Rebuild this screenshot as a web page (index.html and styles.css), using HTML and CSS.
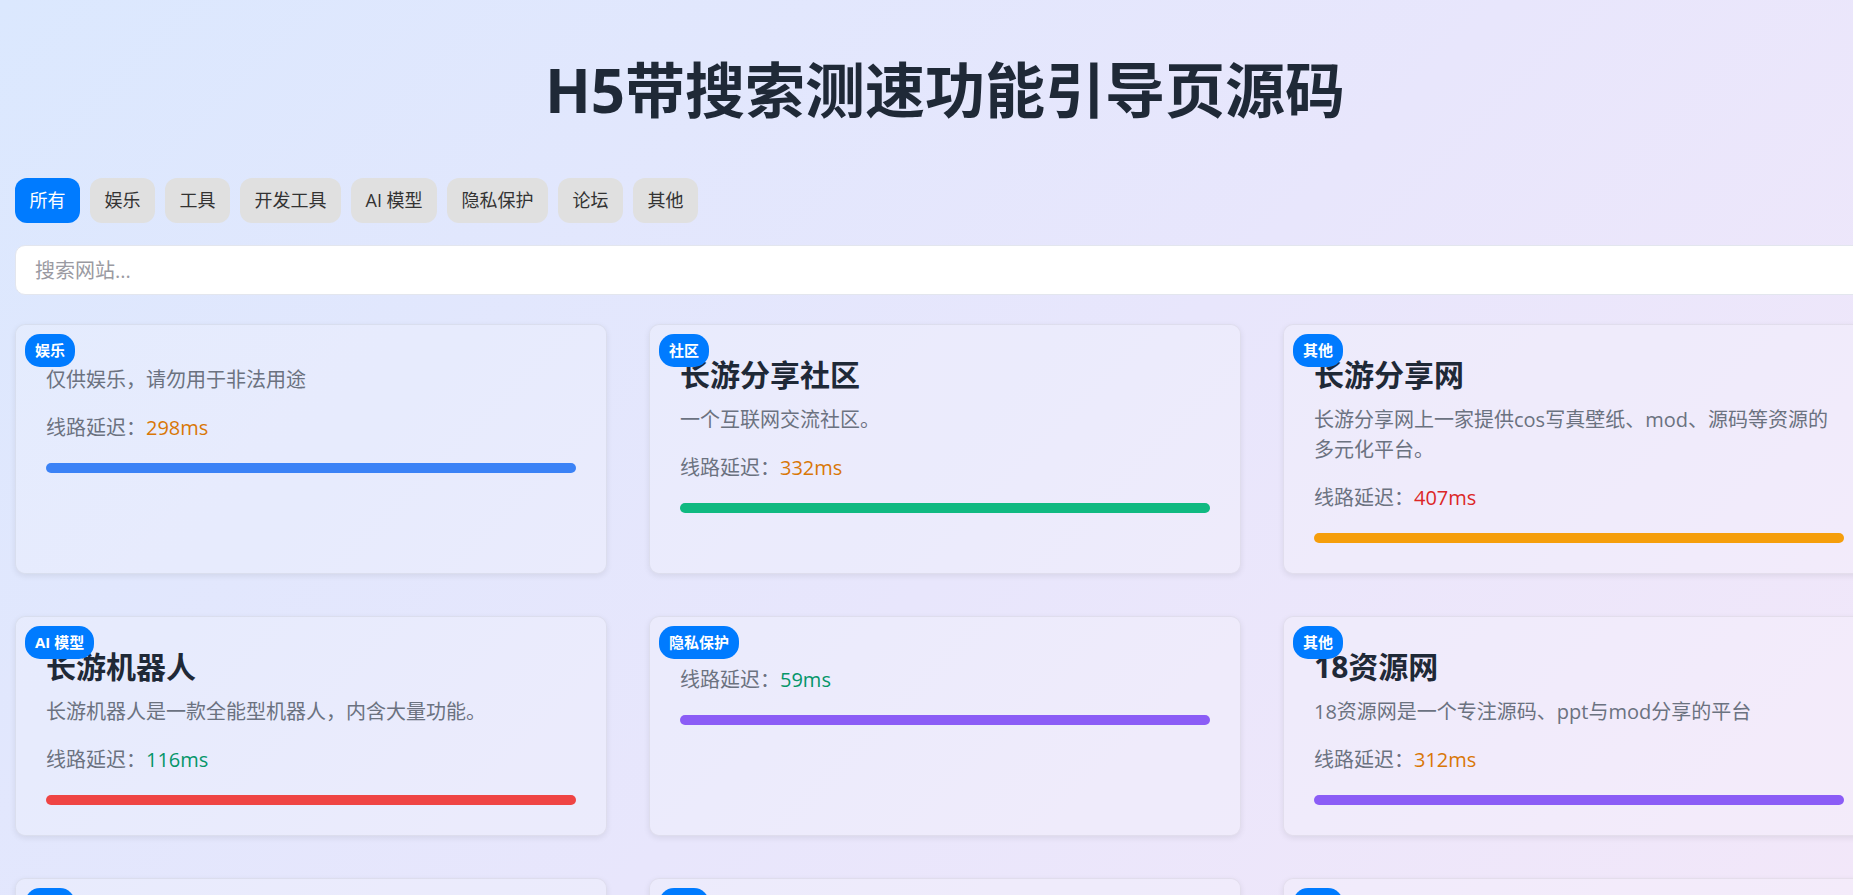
FILE: index.html
```html
<!DOCTYPE html>
<html lang="zh-CN">
<head>
<meta charset="utf-8">
<title>H5带搜索测速功能引导页源码</title>
<link rel="stylesheet" href="styles.css">
</head>
<body>
<div class="page">
  <h1 class="title">H5带搜索测速功能引导页源码</h1>
  <div class="filters">
    <button class="filter active">所有</button>
    <button class="filter">娱乐</button>
    <button class="filter">工具</button>
    <button class="filter">开发工具</button>
    <button class="filter">AI 模型</button>
    <button class="filter">隐私保护</button>
    <button class="filter">论坛</button>
    <button class="filter">其他</button>
  </div>
  <div class="search"><input class="search-input" type="text" placeholder="搜索网站..."></div>
  <div class="grid">
    <div class="card">
      <span class="badge">娱乐</span>
      <p class="desc">仅供娱乐，请勿用于非法用途</p>
      <p class="latency">线路延迟：<span class="ms mid">298ms</span></p>
      <div class="bar blue"></div>
    </div>
    <div class="card">
      <span class="badge">社区</span>
      <h3 class="name">长游分享社区</h3>
      <p class="desc">一个互联网交流社区。</p>
      <p class="latency">线路延迟：<span class="ms mid">332ms</span></p>
      <div class="bar green"></div>
    </div>
    <div class="card">
      <span class="badge">其他</span>
      <h3 class="name">长游分享网</h3>
      <p class="desc">长游分享网上一家提供cos写真壁纸、mod、源码等资源的多元化平台。</p>
      <p class="latency">线路延迟：<span class="ms slow">407ms</span></p>
      <div class="bar amber"></div>
    </div>
    <div class="card">
      <span class="badge">AI 模型</span>
      <h3 class="name">长游机器人</h3>
      <p class="desc">长游机器人是一款全能型机器人，内含大量功能。</p>
      <p class="latency">线路延迟：<span class="ms fast">116ms</span></p>
      <div class="bar red"></div>
    </div>
    <div class="card">
      <span class="badge">隐私保护</span>
      <p class="latency">线路延迟：<span class="ms fast">59ms</span></p>
      <div class="bar purple"></div>
    </div>
    <div class="card">
      <span class="badge">其他</span>
      <h3 class="name">18资源网</h3>
      <p class="desc">18资源网是一个专注源码、ppt与mod分享的平台</p>
      <p class="latency">线路延迟：<span class="ms mid">312ms</span></p>
      <div class="bar purple"></div>
    </div>
    <div class="card">
      <span class="badge">工具</span>
      <h3 class="name">长游工具箱</h3>
      <p class="desc">常用在线工具合集。</p>
      <p class="latency">线路延迟：<span class="ms fast">128ms</span></p>
      <div class="bar blue"></div>
    </div>
    <div class="card">
      <span class="badge">论坛</span>
      <h3 class="name">长游论坛</h3>
      <p class="desc">交流分享的论坛社区。</p>
      <p class="latency">线路延迟：<span class="ms mid">276ms</span></p>
      <div class="bar green"></div>
    </div>
    <div class="card">
      <span class="badge">其他</span>
      <h3 class="name">资源导航</h3>
      <p class="desc">精选资源网站导航。</p>
      <p class="latency">线路延迟：<span class="ms mid">301ms</span></p>
      <div class="bar amber"></div>
    </div>
  </div>
</div>
</body>
</html>
```
FILE: styles.css
```css
html {
  scrollbar-width: none;
}
html::-webkit-scrollbar,
body::-webkit-scrollbar {
  display: none;
}
body {
  margin: 0;
  overflow-x: hidden;
  font-family: "Open Sans", "Noto Sans CJK SC", sans-serif;
  color: #1f2937;
  background: linear-gradient(135deg, #dbe8fe 0%, #e8e6fc 55%, #f2e7f9 100%);
  background-attachment: fixed;
  min-height: 100vh;
}
.page {
  width: 1860px;
  margin-left: 15px;
  padding-bottom: 60px;
}
.title {
  margin: 47px 0 45px;
  text-align: center;
  font-size: 60px;
  line-height: 86px;
  font-weight: 700;
  color: #1f2937;
}
.filters {
  display: flex;
  gap: 10px;
  margin-bottom: 22px;
}
.filter {
  border: 0;
  padding: 10px 14.5px;
  font-family: inherit;
  font-size: 18px;
  line-height: 25px;
  border-radius: 12px;
  background: #e0e0e0;
  color: #333;
}
.filter.active {
  background: #007bff;
  color: #fff;
}
.search {
  margin-bottom: 29px;
}
.search-input {
  display: block;
  box-sizing: border-box;
  width: 100%;
  height: 50px;
  padding: 0 19px;
  border: 1px solid #e3e6ee;
  border-radius: 10px;
  background: #fff;
  font-family: inherit;
  font-size: 20px;
  color: #333;
  outline: none;
}
.search-input::placeholder {
  color: #9a9aa2;
}
.grid {
  display: grid;
  grid-template-columns: repeat(3, 592px);
  gap: 42px;
}
.card {
  position: relative;
  padding: 30px;
  border: 1px solid rgba(0, 0, 0, 0.06);
  border-radius: 10px;
  background: rgba(255, 255, 255, 0.2);
  box-shadow: 0 2px 6px rgba(0, 0, 0, 0.08);
}
.badge {
  position: absolute;
  top: 9px;
  left: 9px;
  padding: 6px 10px;
  font-size: 15px;
  line-height: 21px;
  font-weight: 700;
  color: #fff;
  background: #007bff;
  border-radius: 15px;
}
.name {
  margin: 0;
  font-size: 30px;
  line-height: 40px;
  font-weight: 700;
  color: #1f2937;
}
.desc {
  margin: 10px 0 0;
  font-size: 20px;
  line-height: 30px;
  color: #6b7280;
}
.latency {
  margin: 18px 0 0;
  font-size: 20px;
  line-height: 30px;
  color: #6b7280;
}
.ms.fast { color: #059669; }
.ms.mid { color: #d97706; }
.ms.slow { color: #dc2626; }
.bar {
  margin-top: 20px;
  height: 10px;
  border-radius: 5px;
}
.bar.blue { background: #3b82f6; }
.bar.green { background: #10b981; }
.bar.amber { background: #f59e0b; }
.bar.red { background: #ef4444; }
.bar.purple { background: #8b5cf6; }
```
